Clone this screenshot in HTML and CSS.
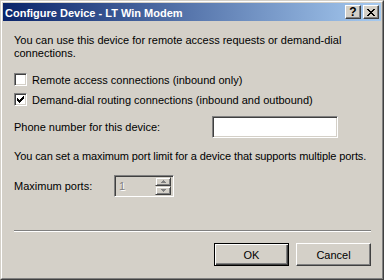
FILE: index.html
```html
<!DOCTYPE html>
<html>
<head>
    <title>Configure Device - LT Win Modem</title>
    <link rel="stylesheet" href="styles.css">
</head>
<body>
    <div class="window">
        <div class="frame">
            <div class="titlebar">
                <span class="title">Configure Device - LT Win Modem</span>
                <div class="caption-buttons">
                    <span class="cap-btn help">?</span>
                    <span class="cap-btn close">
                        <svg width="8" height="7" viewBox="0 0 8 7">
                            <path d="M0 0h2v1H0zM6 0h2v1H6zM1 1h2v1H1zM5 1h2v1H5zM2 2h4v1H2zM3 3h2v1H3zM2 4h4v1H2zM1 5h2v1H1zM5 5h2v1H5zM0 6h2v1H0zM6 6h2v1H6z" fill="#000"/>
                        </svg>
                    </span>
                </div>
            </div>

            <div class="content">
                <p class="intro">You can use this device for remote access requests or demand-dial connections.</p>

                <label class="check">
                    <span class="box"></span>
                    Remote access connections (inbound only)
                </label>
                <label class="check second">
                    <span class="box">
                        <svg width="7" height="7" viewBox="0 0 7 7">
                            <path d="M6 0h1v1H6zM5 1h2v1H5zM0 2h1v1H0zM4 2h3v1H4zM0 3h2v1H0zM3 3h3v1H3zM0 4h5v1H0zM1 5h3v1H1zM2 6h1v1H2z" fill="#000"/>
                        </svg>
                    </span>
                    Demand-dial routing connections (inbound and outbound)
                </label>

                <div class="field-row phone">
                    <span class="field-label">Phone number for this device:</span>
                    <span class="textbox"></span>
                </div>

                <p class="note">You can set a maximum port limit for a device that supports multiple ports.</p>

                <div class="field-row ports">
                    <span class="field-label">Maximum ports:</span>
                    <div class="spin">
                        <span class="spin-value">1</span>
                        <div class="spin-buttons">
                            <span class="spin-btn">
                                <svg width="5" height="3" viewBox="0 0 5 3">
                                    <path d="M3 1h1v1H3zM4 2h1v1H4z" fill="#fff"/>
                                    <path d="M2 0h1v1H2zM1 1h3v1H1zM0 2h5v1H0z" fill="#808080"/>
                                </svg>
                            </span>
                            <span class="spin-btn">
                                <svg width="5" height="3" viewBox="0 0 5 3">
                                    <path d="M0 0h5v1H0zM1 1h3v1H1zM2 2h1v1H2z" fill="#808080"/>
                                </svg>
                            </span>
                        </div>
                    </div>
                </div>

                <div class="separator"></div>

                <div class="buttons">
                    <button class="default">OK</button>
                    <button>Cancel</button>
                </div>
            </div>
        </div>
    </div>
</body>
</html>
```

FILE: styles.css
```css
:root {
    --face: #D4D0C8;
    --shadow: #808080;
    --dark: #404040;
    --light: #FFFFFF;
}

body {
    margin: 0;
    background: var(--face);
    font-family: "Liberation Sans", Arial, sans-serif;
    font-size: 11px;
    color: #000;
}

.window {
    width: 384px;
    height: 280px;
    box-sizing: border-box;
    border: 1px solid;
    border-color: var(--face) var(--dark) var(--dark) var(--face);
    background: var(--face);
}

.frame {
    height: 100%;
    box-sizing: border-box;
    border: 1px solid;
    border-color: var(--light) var(--shadow) var(--shadow) var(--light);
    padding: 1px;
}

.titlebar {
    height: 18px;
    display: flex;
    align-items: center;
    padding: 0 2px;
    background: linear-gradient(to right, #0A246A, #A6CAF0);
    color: #fff;
    font-weight: bold;
}

.title {
    padding-top: 1px;
}

.caption-buttons {
    margin-left: auto;
    display: flex;
    gap: 2px;
}

.cap-btn {
    width: 16px;
    height: 14px;
    box-sizing: border-box;
    display: flex;
    align-items: center;
    justify-content: center;
    background: var(--face);
    border: 1px solid;
    border-color: var(--light) var(--dark) var(--dark) var(--light);
    box-shadow: inset -1px -1px var(--shadow);
    color: #000;
    font-size: 12px;
    line-height: 12px;
}

.content {
    padding: 13px 10px 0 11px;
}

.intro,
.note {
    margin: 0;
    line-height: 13px;
}

.check {
    display: flex;
    align-items: center;
    gap: 5px;
    height: 13px;
    margin-top: 13px;
}

.check.second {
    margin-top: 7px;
}

.box {
    width: 13px;
    height: 13px;
    box-sizing: border-box;
    display: flex;
    align-items: center;
    justify-content: center;
    background: #fff;
    border: 1px solid;
    border-color: var(--shadow) var(--light) var(--light) var(--shadow);
    box-shadow: inset 1px 1px var(--dark), inset -1px -1px var(--face);
}

.field-row {
    display: flex;
    align-items: center;
}

.phone {
    margin-top: 10px;
}

.phone .field-label {
    width: 198px;
}

.textbox {
    width: 126px;
    height: 22px;
    box-sizing: border-box;
    background: #fff;
    border: 1px solid;
    border-color: var(--shadow) var(--light) var(--light) var(--shadow);
    box-shadow: inset 1px 1px var(--dark), inset -1px -1px var(--face);
}

.note {
    margin-top: 12px;
    white-space: nowrap;
    letter-spacing: -0.1px;
}

.ports {
    margin-top: 12px;
}

.ports .field-label {
    width: 100px;
}

.spin {
    width: 60px;
    height: 22px;
    box-sizing: border-box;
    display: flex;
    align-items: center;
    padding: 2px;
    background: var(--face);
    border: 1px solid;
    border-color: var(--shadow) var(--light) var(--light) var(--shadow);
    box-shadow: inset 1px 1px var(--dark), inset -1px -1px var(--face);
}

.spin-value {
    flex: 1;
    padding-left: 2px;
    color: var(--shadow);
    text-shadow: 1px 1px var(--light);
}

.spin-buttons {
    display: flex;
    flex-direction: column;
}

.spin-btn {
    width: 16px;
    height: 9px;
    box-sizing: border-box;
    display: flex;
    align-items: center;
    justify-content: center;
    background: var(--face);
    border: 1px solid;
    border-color: var(--face) var(--dark) var(--dark) var(--face);
    box-shadow: inset 1px 1px var(--light), inset -1px -1px var(--shadow);
}

.separator {
    margin-top: 33px;
    height: 1px;
    background: var(--shadow);
    border-bottom: 1px solid var(--light);
}

.buttons {
    display: flex;
    justify-content: flex-end;
    gap: 7px;
    margin-top: 11px;
}

button {
    width: 75px;
    height: 23px;
    box-sizing: border-box;
    padding: 0;
    font-family: inherit;
    font-size: 11px;
    color: #000;
    background: var(--face);
    border: 1px solid;
    border-color: var(--light) var(--dark) var(--dark) var(--light);
    box-shadow: inset -1px -1px var(--shadow), inset 1px 1px var(--face);
}

button.default {
    border-color: #000;
    box-shadow: inset 1px 1px var(--light), inset -1px -1px var(--dark), inset -2px -2px var(--shadow);
}
```
